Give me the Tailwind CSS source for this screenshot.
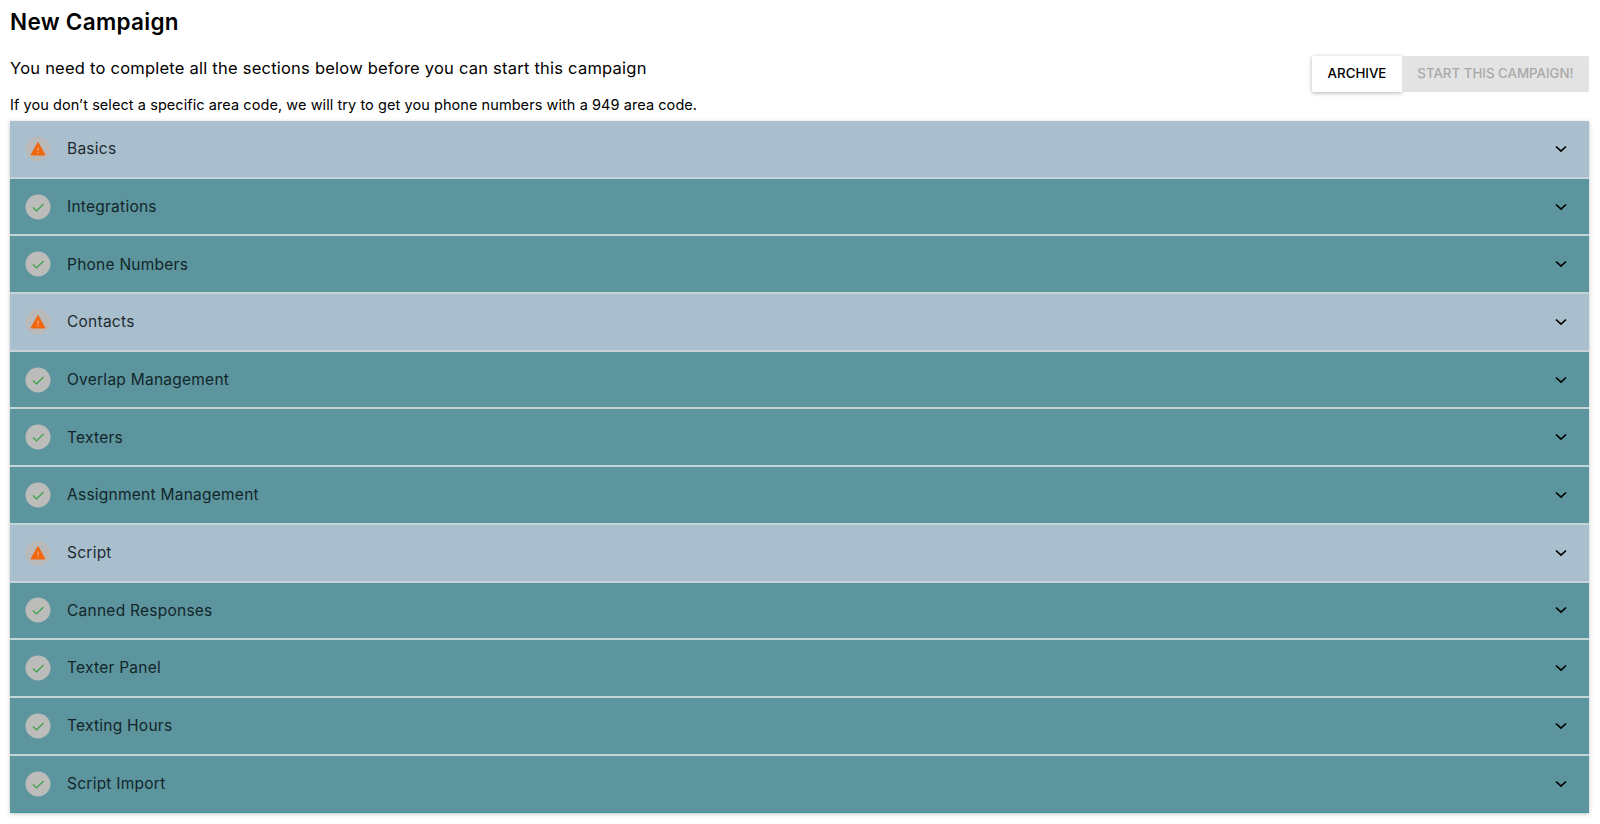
<!DOCTYPE html>
<html lang="en">
<head>
<meta charset="UTF-8">
<title>New Campaign</title>
<script src="https://cdn.jsdelivr.net/npm/@tailwindcss/browser@4"></script>
</head>
<body class="bg-white font-['Inter',sans-serif] text-black overflow-hidden">
<div class="h-[824px] pl-[10px] pr-[11px]">
  <h1 class="pt-[8px] h-[53px] text-[22.5px] leading-[28px] font-semibold tracking-[0.3px]">New Campaign</h1>
  <div class="flex justify-between h-[36px]">
    <p class="pt-[3px] text-[16.5px] leading-[24px] tracking-[0.23px]">You need to complete all the sections below before you can start this campaign</p>
    <div class="flex h-[36px] mt-[3px] text-[13.3px] font-medium">
      <button class="w-[90px] bg-white shadow-[0_1px_4px_rgba(0,0,0,0.3)] rounded-l-[2px]">ARCHIVE</button>
      <button class="w-[187px] bg-[#e3e3e3] text-[#a9a9a9] rounded-r-[2px]">START THIS CAMPAIGN!</button>
    </div>
  </div>
  <p class="h-[32px] pt-[6px] text-[14.5px] leading-[20px] tracking-[0.07px]">If you don’t select a specific area code, we will try to get you phone numbers with a 949 area code.</p>

  <div class="shadow-[0_1px_4px_rgba(0,0,0,0.25)]" id="sections">
    <div class="flex items-center h-[57.7px] pl-[15px] pr-[22px] bg-[#a9bfcd] border-b-2 border-[#c9d3da] text-[15.5px] tracking-[0.25px] text-[#1e2a30]">
      <svg class="w-[26px] h-[26px] mr-[16px]" viewBox="0 0 26 26"><circle cx="13" cy="13" r="12.5" fill="#b9b9b9"/><path d="M13 6.5 L20 19 L6 19 Z" fill="#f4660c" stroke="#f4660c" stroke-linejoin="round"/><rect x="12.4" y="11.5" width="1.2" height="3.5" fill="#e8b08c"/><rect x="12.4" y="16" width="1.2" height="1.3" fill="#e8b08c"/></svg>
      <span class="flex-1">Basics</span>
      <svg class="w-[12px] h-[8px]" viewBox="0 0 12 8"><path d="M1 1.5 L6 6.2 L11 1.5" fill="none" stroke="#000" stroke-width="1.7"/></svg>
    </div>
    <div class="flex items-center h-[57.7px] pl-[15px] pr-[22px] bg-[#5c959d] border-b-2 border-[#c2d4d6] text-[15.5px] tracking-[0.25px] text-[#12262a]">
      <svg class="w-[26px] h-[26px] mr-[16px]" viewBox="0 0 26 26"><circle cx="13" cy="13" r="12.5" fill="#bcbdbb"/><path d="M8 13.5 L11.5 17 L18.5 10" fill="none" stroke="#37a244" stroke-width="1.2"/></svg>
      <span class="flex-1">Integrations</span>
      <svg class="w-[12px] h-[8px]" viewBox="0 0 12 8"><path d="M1 1.5 L6 6.2 L11 1.5" fill="none" stroke="#000" stroke-width="1.7"/></svg>
    </div>
    <div class="flex items-center h-[57.7px] pl-[15px] pr-[22px] bg-[#5c959d] border-b-2 border-[#c2d4d6] text-[15.5px] tracking-[0.25px] text-[#12262a]">
      <svg class="w-[26px] h-[26px] mr-[16px]" viewBox="0 0 26 26"><circle cx="13" cy="13" r="12.5" fill="#bcbdbb"/><path d="M8 13.5 L11.5 17 L18.5 10" fill="none" stroke="#37a244" stroke-width="1.2"/></svg>
      <span class="flex-1">Phone Numbers</span>
      <svg class="w-[12px] h-[8px]" viewBox="0 0 12 8"><path d="M1 1.5 L6 6.2 L11 1.5" fill="none" stroke="#000" stroke-width="1.7"/></svg>
    </div>
    <div class="flex items-center h-[57.7px] pl-[15px] pr-[22px] bg-[#a9bfcd] border-b-2 border-[#c9d3da] text-[15.5px] tracking-[0.25px] text-[#1e2a30]">
      <svg class="w-[26px] h-[26px] mr-[16px]" viewBox="0 0 26 26"><circle cx="13" cy="13" r="12.5" fill="#b9b9b9"/><path d="M13 6.5 L20 19 L6 19 Z" fill="#f4660c" stroke="#f4660c" stroke-linejoin="round"/><rect x="12.4" y="11.5" width="1.2" height="3.5" fill="#e8b08c"/><rect x="12.4" y="16" width="1.2" height="1.3" fill="#e8b08c"/></svg>
      <span class="flex-1">Contacts</span>
      <svg class="w-[12px] h-[8px]" viewBox="0 0 12 8"><path d="M1 1.5 L6 6.2 L11 1.5" fill="none" stroke="#000" stroke-width="1.7"/></svg>
    </div>
    <div class="flex items-center h-[57.7px] pl-[15px] pr-[22px] bg-[#5c959d] border-b-2 border-[#c2d4d6] text-[15.5px] tracking-[0.25px] text-[#12262a]">
      <svg class="w-[26px] h-[26px] mr-[16px]" viewBox="0 0 26 26"><circle cx="13" cy="13" r="12.5" fill="#bcbdbb"/><path d="M8 13.5 L11.5 17 L18.5 10" fill="none" stroke="#37a244" stroke-width="1.2"/></svg>
      <span class="flex-1">Overlap Management</span>
      <svg class="w-[12px] h-[8px]" viewBox="0 0 12 8"><path d="M1 1.5 L6 6.2 L11 1.5" fill="none" stroke="#000" stroke-width="1.7"/></svg>
    </div>
    <div class="flex items-center h-[57.7px] pl-[15px] pr-[22px] bg-[#5c959d] border-b-2 border-[#c2d4d6] text-[15.5px] tracking-[0.25px] text-[#12262a]">
      <svg class="w-[26px] h-[26px] mr-[16px]" viewBox="0 0 26 26"><circle cx="13" cy="13" r="12.5" fill="#bcbdbb"/><path d="M8 13.5 L11.5 17 L18.5 10" fill="none" stroke="#37a244" stroke-width="1.2"/></svg>
      <span class="flex-1">Texters</span>
      <svg class="w-[12px] h-[8px]" viewBox="0 0 12 8"><path d="M1 1.5 L6 6.2 L11 1.5" fill="none" stroke="#000" stroke-width="1.7"/></svg>
    </div>
    <div class="flex items-center h-[57.7px] pl-[15px] pr-[22px] bg-[#5c959d] border-b-2 border-[#c2d4d6] text-[15.5px] tracking-[0.25px] text-[#12262a]">
      <svg class="w-[26px] h-[26px] mr-[16px]" viewBox="0 0 26 26"><circle cx="13" cy="13" r="12.5" fill="#bcbdbb"/><path d="M8 13.5 L11.5 17 L18.5 10" fill="none" stroke="#37a244" stroke-width="1.2"/></svg>
      <span class="flex-1">Assignment Management</span>
      <svg class="w-[12px] h-[8px]" viewBox="0 0 12 8"><path d="M1 1.5 L6 6.2 L11 1.5" fill="none" stroke="#000" stroke-width="1.7"/></svg>
    </div>
    <div class="flex items-center h-[57.7px] pl-[15px] pr-[22px] bg-[#a9bfcd] border-b-2 border-[#c9d3da] text-[15.5px] tracking-[0.25px] text-[#1e2a30]">
      <svg class="w-[26px] h-[26px] mr-[16px]" viewBox="0 0 26 26"><circle cx="13" cy="13" r="12.5" fill="#b9b9b9"/><path d="M13 6.5 L20 19 L6 19 Z" fill="#f4660c" stroke="#f4660c" stroke-linejoin="round"/><rect x="12.4" y="11.5" width="1.2" height="3.5" fill="#e8b08c"/><rect x="12.4" y="16" width="1.2" height="1.3" fill="#e8b08c"/></svg>
      <span class="flex-1">Script</span>
      <svg class="w-[12px] h-[8px]" viewBox="0 0 12 8"><path d="M1 1.5 L6 6.2 L11 1.5" fill="none" stroke="#000" stroke-width="1.7"/></svg>
    </div>
    <div class="flex items-center h-[57.7px] pl-[15px] pr-[22px] bg-[#5c959d] border-b-2 border-[#c2d4d6] text-[15.5px] tracking-[0.25px] text-[#12262a]">
      <svg class="w-[26px] h-[26px] mr-[16px]" viewBox="0 0 26 26"><circle cx="13" cy="13" r="12.5" fill="#bcbdbb"/><path d="M8 13.5 L11.5 17 L18.5 10" fill="none" stroke="#37a244" stroke-width="1.2"/></svg>
      <span class="flex-1">Canned Responses</span>
      <svg class="w-[12px] h-[8px]" viewBox="0 0 12 8"><path d="M1 1.5 L6 6.2 L11 1.5" fill="none" stroke="#000" stroke-width="1.7"/></svg>
    </div>
    <div class="flex items-center h-[57.7px] pl-[15px] pr-[22px] bg-[#5c959d] border-b-2 border-[#c2d4d6] text-[15.5px] tracking-[0.25px] text-[#12262a]">
      <svg class="w-[26px] h-[26px] mr-[16px]" viewBox="0 0 26 26"><circle cx="13" cy="13" r="12.5" fill="#bcbdbb"/><path d="M8 13.5 L11.5 17 L18.5 10" fill="none" stroke="#37a244" stroke-width="1.2"/></svg>
      <span class="flex-1">Texter Panel</span>
      <svg class="w-[12px] h-[8px]" viewBox="0 0 12 8"><path d="M1 1.5 L6 6.2 L11 1.5" fill="none" stroke="#000" stroke-width="1.7"/></svg>
    </div>
    <div class="flex items-center h-[57.7px] pl-[15px] pr-[22px] bg-[#5c959d] border-b-2 border-[#c2d4d6] text-[15.5px] tracking-[0.25px] text-[#12262a]">
      <svg class="w-[26px] h-[26px] mr-[16px]" viewBox="0 0 26 26"><circle cx="13" cy="13" r="12.5" fill="#bcbdbb"/><path d="M8 13.5 L11.5 17 L18.5 10" fill="none" stroke="#37a244" stroke-width="1.2"/></svg>
      <span class="flex-1">Texting Hours</span>
      <svg class="w-[12px] h-[8px]" viewBox="0 0 12 8"><path d="M1 1.5 L6 6.2 L11 1.5" fill="none" stroke="#000" stroke-width="1.7"/></svg>
    </div>
    <div class="flex items-center h-[57.7px] pl-[15px] pr-[22px] bg-[#5c959d] border-b border-[#3f9a9c] text-[15.5px] tracking-[0.25px] text-[#12262a]">
      <svg class="w-[26px] h-[26px] mr-[16px]" viewBox="0 0 26 26"><circle cx="13" cy="13" r="12.5" fill="#bcbdbb"/><path d="M8 13.5 L11.5 17 L18.5 10" fill="none" stroke="#37a244" stroke-width="1.2"/></svg>
      <span class="flex-1">Script Import</span>
      <svg class="w-[12px] h-[8px]" viewBox="0 0 12 8"><path d="M1 1.5 L6 6.2 L11 1.5" fill="none" stroke="#000" stroke-width="1.7"/></svg>
    </div>
  </div>
</div>
</body>
</html>
